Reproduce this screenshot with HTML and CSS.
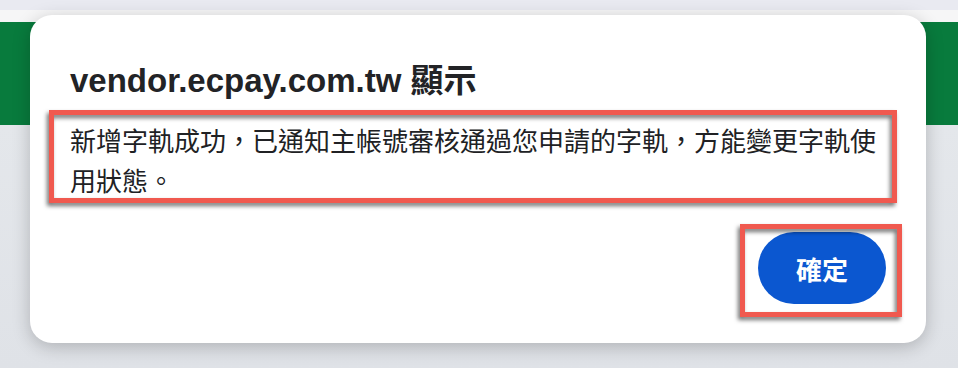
FILE: index.html
```html
<!DOCTYPE html>
<html lang="zh-TW">
<head>
    <meta charset="UTF-8">
    <meta name="viewport" content="width=device-width, initial-scale=1.0">
    <title>vendor.ecpay.com.tw</title>
    <link rel="stylesheet" href="styles.css">
</head>
<body>

    <div class="tab-strip"></div>
    <div class="toolbar"></div>
    <div class="header"></div>
    <div class="page"></div>

    <div class="dialog">
        <h1 class="dialog-title">vendor.ecpay.com.tw 顯示</h1>
        <p class="dialog-message">新增字軌成功，已通知主帳號審核通過您申請的字軌，方能變更字軌使用狀態。</p>
        <div class="dialog-actions">
            <button class="ok-button">確定</button>
        </div>
        <div class="mark mark-message"></div>
        <div class="mark mark-button"></div>
    </div>

</body>
</html>
```

FILE: styles.css
```css
body {
    margin: 0;
    padding: 0;
    background-color: #e1e4e9;
    font-family: "Liberation Sans", "Noto Sans CJK TC", sans-serif;
    height: 368px;
    overflow: hidden;
}
.tab-strip {
    height: 10px;
    background-color: #e9eaf1;
}
.toolbar {
    height: 12px;
    background-color: #f6f6f7;
}
.header {
    height: 103px;
    background-color: #087b3d;
}
.page {
    height: 243px;
    background: linear-gradient(to bottom, #e4e7eb, #dfe2e7);
}
.dialog {
    position: absolute;
    top: 15px;
    left: 30px;
    width: 816px;
    padding: 46px 40px 39px;
    background-color: white;
    border-radius: 22px;
    box-shadow: 0 4px 18px rgba(0, 0, 0, 0.22);
}
.dialog-title {
    margin: 0;
    font-size: 33px;
    line-height: 40px;
    font-weight: bold;
    color: #222326;
}
.dialog-message {
    margin: 19px 0 0;
    font-family: "Noto Sans CJK TC", sans-serif;
    font-size: 26px;
    line-height: 40px;
    color: #202124;
}
.dialog-actions {
    display: flex;
    justify-content: flex-end;
    margin-top: 32px;
}
.ok-button {
    width: 128px;
    height: 72px;
    border: none;
    border-radius: 36px;
    background-color: #0b57d0;
    color: white;
    font-family: "Noto Sans CJK TC", sans-serif;
    font-size: 26px;
    font-weight: bold;
    cursor: pointer;
}
.mark {
    position: absolute;
    border: 5px solid #f0594f;
    filter: drop-shadow(-2px 3px 2px rgba(0, 0, 0, 0.55));
}
.mark-message {
    top: 95px;
    left: 19px;
    width: 838px;
    height: 83px;
}
.mark-button {
    top: 209px;
    left: 710px;
    width: 152px;
    height: 83px;
}
```
